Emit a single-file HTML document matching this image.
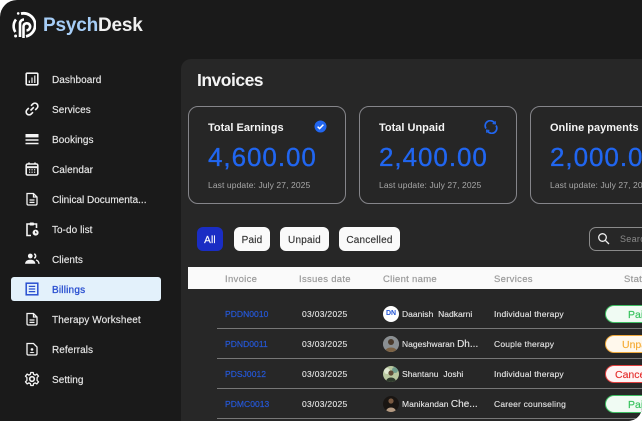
<!DOCTYPE html>
<html><head><meta charset="utf-8"><style>
*{box-sizing:border-box;margin:0;padding:0}
html,body{width:642px;height:421px;overflow:hidden;background:#fff}
body{font-family:"Liberation Sans",sans-serif;position:relative}
.a{position:absolute;white-space:nowrap}
#root{position:absolute;left:0;top:0;width:642px;height:421px;background:#1a1a1a;border-radius:17px 0 14px 0;overflow:hidden}
.nav{position:absolute;left:52px;margin-top:2px;font-size:10px;line-height:14px;color:#e8e8e8;letter-spacing:.05px;white-space:nowrap;-webkit-text-stroke:.15px #e8e8e8}
.ic{position:absolute;left:24px;width:16px;height:16px;fill:none;stroke:#f4f4f4;stroke-width:1.6}
.card{position:absolute;top:106px;width:158px;height:98px;border:1px solid #85858a;border-radius:10px;background:#262626}
.ct{position:absolute;left:19px;top:14px;font-size:11px;line-height:14px;font-weight:bold;color:#f4f4f4;white-space:nowrap;letter-spacing:0}
.cv{position:absolute;left:19px;top:34px;font-size:26px;line-height:32px;color:#2166f0;white-space:nowrap;letter-spacing:.95px;-webkit-text-stroke:.35px #2166f0}
.cu{position:absolute;left:19px;top:72px;font-size:8.5px;line-height:12px;color:#a8a8a8;white-space:nowrap;letter-spacing:.1px}
.f{position:absolute;top:227px;height:24px;border-radius:6px;background:#fafafa;color:#333;font-size:10px;line-height:27px;text-align:center;letter-spacing:.2px;-webkit-text-stroke:.15px #333}
.h{position:absolute;top:273px;font-size:9.5px;line-height:13px;color:#9a9a9a;letter-spacing:.3px;white-space:nowrap;-webkit-text-stroke:.2px #9a9a9a}
.t{position:absolute;font-size:8.5px;line-height:12px;color:#e6e6e6;white-space:nowrap;letter-spacing:.18px;-webkit-text-stroke:.12px #e6e6e6}
.id{color:#2557d6;letter-spacing:.05px;-webkit-text-stroke:.2px #2557d6}
.n{letter-spacing:.02px}
.sep{position:absolute;left:217px;right:0;height:1.5px;background:#777}
.p{position:absolute;left:605px;width:60px;height:18px;border-radius:9px;font-size:10.5px;line-height:18px;border:1px solid;white-space:nowrap;-webkit-text-stroke:.15px currentColor}
.av{position:absolute;left:383px;width:16px;height:16px;border-radius:50%;overflow:hidden}
</style></head><body><div id="root">

<!-- logo -->
<svg class="a" style="left:12px;top:11px" width="24" height="29" viewBox="0 0 24 29" fill="none" stroke="#fff">
<path d="M9 2.6 A11 11 0 0 1 14 25.4" stroke-width="2.8"/>
<circle cx="6.2" cy="2.4" r="1.3" fill="#fff" stroke="none"/>
<path d="M3.4 21 A10.5 10.5 0 0 1 4 8.5" stroke-width="2.6"/>
<circle cx="3.6" cy="25" r="1.5" fill="#fff" stroke="none"/>
<path d="M8 26 V13 A4 4 0 0 1 12 8.5" stroke-width="2.6"/>
<path d="M11.5 27 V15 A3.4 3.4 0 0 1 18 14.5 A4 4 0 0 1 14.5 19.5" stroke-width="2.6"/>
</svg>
<div class="a" style="left:43px;top:14px;font-size:19px;line-height:24px;font-weight:bold;color:#f0f0f0;letter-spacing:-.2px"><span style="color:#a6cdf6">Psych</span>Desk</div>

<!-- nav -->
<svg class="ic" style="top:71px" viewBox="0 0 16 16"><rect x="2.2" y="2.2" width="11.6" height="11.6" rx="1"/><path d="M5.3 12V9.5M8 12V6.5M10.8 12V4.5" stroke-width="1.2"/></svg>
<div class="nav" style="top:72px">Dashboard</div>
<svg class="ic" style="top:101px" viewBox="0 0 16 16"><path d="M6.5 9.5 L9.8 6.2M7 4.8 L8.8 3 A2.8 2.8 0 0 1 13 7.2 L11.2 9M9 11.2 L7.2 13 A2.8 2.8 0 0 1 3 8.8 L4.8 7"/></svg>
<div class="nav" style="top:102px">Services</div>
<svg class="ic" style="top:131px" viewBox="0 0 16 16"><rect x="1.5" y="3" width="13" height="3.4" fill="#f4f4f4" stroke="none"/><path d="M1.5 9H14.5M1.5 12.5H14.5"/></svg>
<div class="nav" style="top:132px">Bookings</div>
<svg class="ic" style="top:161px" viewBox="0 0 16 16"><rect x="2.2" y="3" width="11.6" height="11" rx="1.4"/><path d="M2.2 6.2H13.8" stroke-width="2"/><path d="M5 1.5V3.5M11 1.5V3.5"/><path d="M5 8.8h1.2M7.5 8.8h1.2M10 8.8h1.2M5 11.2h1.2M7.5 11.2h1.2M10 11.2h1.2" stroke-width="1.2"/></svg>
<div class="nav" style="top:162px">Calendar</div>
<svg class="ic" style="top:191px" viewBox="0 0 16 16"><path d="M3 2.5 H9.5 L13 6 V12.8 A1.2 1.2 0 0 1 11.8 14 H4.2 A1.2 1.2 0 0 1 3 12.8 Z M9.5 2.5 V6 H13 M5.5 9H10.5M5.5 11.4H10.5" stroke-width="1.3"/></svg>
<div class="nav" style="top:192px;letter-spacing:0">Clinical Documenta...</div>
<svg class="ic" style="top:221px" viewBox="0 0 16 16"><path d="M5.8 3H3V14.5H7M10 3H12.5V7" /><rect x="5.6" y="1.5" width="4.4" height="3" rx=".8" fill="#f4f4f4" stroke="none"/><circle cx="11.6" cy="11.6" r="3" fill="#f4f4f4" stroke="none"/><path d="M11.6 10.2V11.8H12.8" stroke="#1a1a1a" stroke-width=".9"/></svg>
<div class="nav" style="top:222px">To-do list</div>
<svg class="ic" style="top:251px" viewBox="0 0 16 16"><circle cx="6.3" cy="5" r="2.4" fill="#f4f4f4" stroke="none"/><path d="M10.2 2.8 A2.4 2.4 0 0 1 10.2 7.2" stroke-width="1.5"/><path d="M1 12.8 C1.4 9.4 4 8.8 6.3 8.8 C8.6 8.8 11 9.4 11.4 12.8 Z" fill="#f4f4f4" stroke="none"/><path d="M12 9 C14 9.5 14.8 11 15 12.8" stroke-width="1.4"/></svg>
<div class="nav" style="top:252px">Clients</div>
<div class="a" style="left:11px;top:277px;width:150px;height:24px;background:#e3f1fb;border-radius:3px"></div>
<svg class="ic" style="top:281px;stroke:#2a4fd0" viewBox="0 0 16 16"><rect x="2.2" y="2.2" width="11.6" height="11.6" stroke-width="1.5"/><path d="M4.8 5.4H11.2M4.8 8H11.2M4.8 10.6H11.2" stroke-width="1.3"/></svg>
<div class="nav" style="top:282px;color:#2a4fd0;letter-spacing:.2px;-webkit-text-stroke:.3px #2a4fd0">Billings</div>
<svg class="ic" style="top:311px" viewBox="0 0 16 16"><path d="M3 2.5 H9.5 L13 6 V12.8 A1.2 1.2 0 0 1 11.8 14 H4.2 A1.2 1.2 0 0 1 3 12.8 Z M9.5 2.5 V6 H13 M5.5 9H10.5M5.5 11.4H10.5" stroke-width="1.3"/></svg>
<div class="nav" style="top:312px;letter-spacing:.1px">Therapy Worksheet</div>
<svg class="ic" style="top:341px" viewBox="0 0 16 16"><path d="M3 2.5 H9.5 L13 6 V12.8 A1.2 1.2 0 0 1 11.8 14 H4.2 A1.2 1.2 0 0 1 3 12.8 Z" stroke-width="1.3"/><circle cx="8" cy="8.4" r="1.3" fill="#f4f4f4" stroke="none"/><path d="M5.6 12 C6 10.5 10 10.5 10.4 12 Z" fill="#f4f4f4" stroke="none"/></svg>
<div class="nav" style="top:342px">Referrals</div>
<svg class="ic" style="top:371px" viewBox="0 0 16 16"><circle cx="8" cy="8" r="2.3"/><path d="M6.8 1.5H9.2L9.6 3.4L11.2 4.1L12.9 3.1L14.5 5.2L13.1 6.6V9.4L14.5 10.8L12.9 12.9L11.2 11.9L9.6 12.6L9.2 14.5H6.8L6.4 12.6L4.8 11.9L3.1 12.9L1.5 10.8L2.9 9.4V6.6L1.5 5.2L3.1 3.1L4.8 4.1L6.4 3.4Z" stroke-width="1.3" stroke-linejoin="round"/></svg>
<div class="nav" style="top:372px">Setting</div>

<!-- main panel -->
<div class="a" style="left:181px;top:59px;width:461px;height:362px;background:#272727;border-radius:10px 0 0 0"></div>
<div class="a" style="left:197px;top:69px;font-size:17.5px;line-height:22px;font-weight:bold;color:#f4f4f4;letter-spacing:-.5px">Invoices</div>

<div class="card" style="left:188px"><div class="ct">Total Earnings</div><div class="cv">4,600.00</div><div class="cu">Last update: July 27, 2025</div>
<svg class="a" style="left:125px;top:13px" width="13" height="13" viewBox="0 0 13 13"><circle cx="6.5" cy="6.5" r="6" fill="#2166f0"/><path d="M3.6 6.6L5.6 8.6L9.4 4.6" fill="none" stroke="#fff" stroke-width="1.5"/></svg></div>
<div class="card" style="left:359px"><div class="ct">Total Unpaid</div><div class="cv">2,400.00</div><div class="cu">Last update: July 27, 2025</div>
<svg class="a" style="left:124px;top:13px" width="14" height="14" viewBox="0 0 14 14" fill="none" stroke="#2166f0" stroke-width="1.7"><path d="M2 8.5 A5 5 0 0 1 10.5 3"/><path d="M12 5.5 A5 5 0 0 1 3.5 11"/><path d="M8.6 3.6L11.4 3.9L11.2 1.2" stroke-width="1.1"/><path d="M5.4 10.4L2.6 10.1L2.8 12.8" stroke-width="1.1"/></svg></div>
<div class="card" style="left:530px;width:180px"><div class="ct">Online payments</div><div class="cv">2,000.00</div><div class="cu">Last update: July 27, 2025</div></div>

<!-- filters -->
<div class="f" style="left:197px;width:26px;background:#1a2dc4;color:#fff;-webkit-text-stroke:.15px #fff">All</div>
<div class="f" style="left:234px;width:36px">Paid</div>
<div class="f" style="left:280px;width:49px">Unpaid</div>
<div class="f" style="left:339px;width:61px">Cancelled</div>
<div class="a" style="left:589px;top:227px;width:80px;height:24px;border:1px solid #8b8b8b;border-radius:7px"></div>
<svg class="a" style="left:597px;top:232px" width="13" height="13" viewBox="0 0 13 13" fill="none" stroke="#eee" stroke-width="1.3"><circle cx="5.5" cy="5.5" r="3.8"/><path d="M8.4 8.4L12 12"/></svg>
<div class="a" style="left:620px;top:233px;font-size:9px;line-height:12px;color:#8a8a8a;letter-spacing:.3px">Search</div>

<!-- table header -->
<div class="a" style="left:188px;top:267px;width:454px;height:22px;background:#fafafa"></div>
<div class="h" style="left:225px">Invoice</div>
<div class="h" style="left:299px">Issues date</div>
<div class="h" style="left:383px">Client name</div>
<div class="h" style="left:494px">Services</div>
<div class="h" style="left:624px">Status</div>

<!-- rows -->
<div class="t id" style="left:225px;top:308px">PDDN0010</div>
<div class="t" style="left:302px;top:308px;letter-spacing:.3px">03/03/2025</div>
<div class="av" style="top:306px;background:#fff;color:#2557d6;font-size:7px;font-weight:bold;line-height:16px;text-align:center">DN</div>
<div class="t n" style="left:402px;top:308px">Daanish&nbsp; Nadkarni</div>
<div class="t" style="left:494px;top:308px">Individual therapy</div>
<div class="p" style="top:305px;background:#f0fbf3;border-color:#3fbf63;color:#35c25c"><span style="margin-left:22px">Paid</span></div>
<div class="sep" style="top:327.5px"></div>

<div class="t id" style="left:225px;top:338px">PDND0011</div>
<div class="t" style="left:302px;top:338px;letter-spacing:.3px">03/03/2025</div>
<div class="av" style="top:336px;background:#7a6a58"><svg width="16" height="16" viewBox="0 0 16 16"><rect width="16" height="16" fill="#8a8f92"/><circle cx="8" cy="6" r="3" fill="#4a3a2c"/><path d="M2 16C2 10 14 10 14 16Z" fill="#7c6244"/></svg></div>
<div class="t n" style="left:402px;top:338px">Nageshwaran <span style="font-size:10px">Dh...</span></div>
<div class="t" style="left:494px;top:338px">Couple therapy</div>
<div class="p" style="top:335px;background:#fff8ec;border-color:#efa93d;color:#f5ab33"><span style="margin-left:16px">Unpaid</span></div>
<div class="sep" style="top:357.5px"></div>

<div class="t id" style="left:225px;top:368px">PDSJ0012</div>
<div class="t" style="left:302px;top:368px;letter-spacing:.3px">03/03/2025</div>
<div class="av" style="top:366px"><svg width="16" height="16" viewBox="0 0 16 16"><rect width="16" height="16" fill="#b9c8a0"/><circle cx="4" cy="5" r="3" fill="#dfe8d0"/><circle cx="12" cy="4" r="3" fill="#6f9c8c"/><circle cx="8" cy="7" r="2.6" fill="#5e4a36"/><path d="M3 16C3 10 13 10 13 16Z" fill="#2e3a2c"/></svg></div>
<div class="t n" style="left:402px;top:368px">Shantanu&nbsp; Joshi</div>
<div class="t" style="left:494px;top:368px">Individual therapy</div>
<div class="p" style="top:365px;background:#fff5f5;border-color:#e2403f;color:#e5302f"><span style="margin-left:9px">Cancelled</span></div>
<div class="sep" style="top:387.5px"></div>

<div class="t id" style="left:225px;top:398px">PDMC0013</div>
<div class="t" style="left:302px;top:398px;letter-spacing:.3px">03/03/2025</div>
<div class="av" style="top:396px"><svg width="16" height="16" viewBox="0 0 16 16"><rect width="16" height="16" fill="#191512"/><circle cx="8" cy="5" r="2.6" fill="#7a5a42"/><path d="M3 16C3 10 13 10 13 16Z" fill="#b49a82"/></svg></div>
<div class="t n" style="left:402px;top:398px">Manikandan <span style="font-size:10px">Che...</span></div>
<div class="t" style="left:494px;top:398px">Career counseling</div>
<div class="p" style="top:395px;background:#f0fbf3;border-color:#3fbf63;color:#35c25c"><span style="margin-left:22px">Paid</span></div>
<div class="sep" style="top:417.5px"></div>
</div></body></html>
